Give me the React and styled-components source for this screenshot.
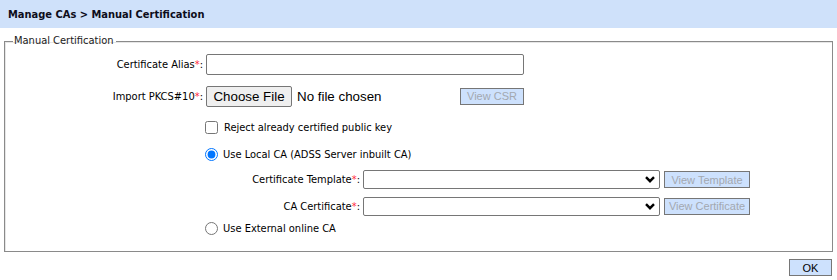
import styled, { createGlobalStyle } from "styled-components";

const GlobalStyle = createGlobalStyle`
    body {
        margin: 0;
        background: white;
        font-family: "DejaVu Sans Condensed", "Liberation Sans", sans-serif;
        font-size: 11px;
        color: #000;
    }
`

const Chevron = () => (
    <svg width="10" height="7" viewBox="0 0 10 7">
        <path d="M1 1.2 L5 5.2 L9 1.2" fill="none" stroke="#000" strokeWidth="2.4" />
    </svg>
)

const App = () => {

    return (
        <Wrapper>
            <GlobalStyle />
            <Header>Manage CAs &gt; Manual Certification</Header>
            <Fieldset>
                <Legend>Manual Certification</Legend>
                <Row $h={32}>
                    <Label $w={198}>Certificate Alias<Star>*</Star>:</Label>
                    <TextInput type="text" />
                </Row>
                <Row $h={32}>
                    <Label $w={198}>Import PKCS#10<Star>*</Star>:</Label>
                    <FileArea>
                        <ChooseButton>Choose File</ChooseButton>
                        <FileName>No file chosen</FileName>
                    </FileArea>
                    <SmallButton $w={64}>View CSR</SmallButton>
                </Row>
                <Row $h={30}>
                    <Option>
                        <Check type="checkbox" />
                        Reject already certified public key
                    </Option>
                </Row>
                <Row $h={24}>
                    <Option>
                        <Radio type="radio" name="ca" defaultChecked />
                        Use Local CA (ADSS Server inbuilt CA)
                    </Option>
                </Row>
                <Row $h={27}>
                    <Label $w={355}>Certificate Template<Star>*</Star>:</Label>
                    <SelectWrap>
                        <Select><option></option></Select>
                        <Arrow><Chevron /></Arrow>
                    </SelectWrap>
                    <SmallButton $w={86}>View Template</SmallButton>
                </Row>
                <Row $h={26}>
                    <Label $w={355}>CA Certificate<Star>*</Star>:</Label>
                    <SelectWrap>
                        <Select><option></option></Select>
                        <Arrow><Chevron /></Arrow>
                    </SelectWrap>
                    <SmallButton $w={86}>View Certificate</SmallButton>
                </Row>
                <Row $h={19}>
                    <Option>
                        <Radio type="radio" name="ca" />
                        Use External online CA
                    </Option>
                </Row>
            </Fieldset>
            <Footer>
                <SmallButton $w={43} $active>OK</SmallButton>
            </Footer>
        </Wrapper>
    )
};

const Wrapper = styled.div`
    width: 837px;
    height: 280px;
    overflow: hidden;
`
const Header = styled.div`
    height: 28px;
    background-color: #cfe1fa;
    display: flex;
    align-items: center;
    padding-left: 8px;
    font-weight: bold;
    font-size: 11px;
    color: #0d0d1a;
`
const Fieldset = styled.fieldset`
    margin: 6px 4px 0 4px;
    padding: 0 0 13px 0;
    border: 1px solid #8a8a8a;
    box-shadow: inset 1px 1px 0 #e6e6e6;
    min-width: 0;
`
const Legend = styled.legend`
    margin-left: 8px;
    padding: 0 2px 0 1px;
    line-height: 14px;
    color: #1a1a1a;
`
const Row = styled.div`
    height: ${p => p.$h}px;
    display: flex;
    align-items: center;
`
const Label = styled.div`
    width: ${p => p.$w}px;
    text-align: right;
    padding-right: 2px;
    flex-shrink: 0;
`
const Star = styled.span`
    color: #ff2a3a;
`
const TextInput = styled.input`
    width: 318px;
    height: 21px;
    box-sizing: border-box;
    margin: 0 0 0 1px;
    border: 1px solid #767676;
    border-radius: 2px;
    padding: 1px 2px;
`
const FileArea = styled.div`
    width: 250px;
    margin-left: 1px;
    display: flex;
    align-items: center;
    font-family: "Liberation Sans", Arial, sans-serif;
    font-size: 13.33px;
`
const ChooseButton = styled.button`
    height: 21px;
    width: 86px;
    padding: 0;
    background: #efefef;
    border: 1px solid #767676;
    border-radius: 2px;
    font-family: inherit;
    font-size: inherit;
    color: #000;
`
const FileName = styled.span`
    margin-left: 5px;
    color: #000;
`
const SmallButton = styled.button`
    width: ${p => p.$w}px;
    height: 17px;
    box-sizing: border-box;
    margin-left: 4px;
    padding: 0;
    background: #cde1fd;
    border: 1px solid #767676;
    font-family: "Liberation Sans", Arial, sans-serif;
    font-size: 11px;
    color: ${p => p.$active ? "#000" : "#a3a8b0"};
`
const Option = styled.label`
    display: flex;
    align-items: center;
    padding-left: 199px;
`
const Check = styled.input`
    width: 13px;
    height: 13px;
    margin: 0 6px 0 1px;
`
const Radio = styled.input`
    width: 13px;
    height: 13px;
    margin: 0 5px 0 1px;
`
const SelectWrap = styled.div`
    position: relative;
    margin-left: 1px;
    display: flex;
`
const Select = styled.select`
    width: 297px;
    height: 19px;
    appearance: none;
    background: white;
    border: 1px solid #767676;
    border-radius: 2px;
    padding: 0 2px;
`
const Arrow = styled.span`
    position: absolute;
    right: 5px;
    top: 6px;
    pointer-events: none;
    display: flex;
`
const Footer = styled.div`
    display: flex;
    justify-content: flex-end;
    padding: 7px 5px 0 0;
`

export default App;
